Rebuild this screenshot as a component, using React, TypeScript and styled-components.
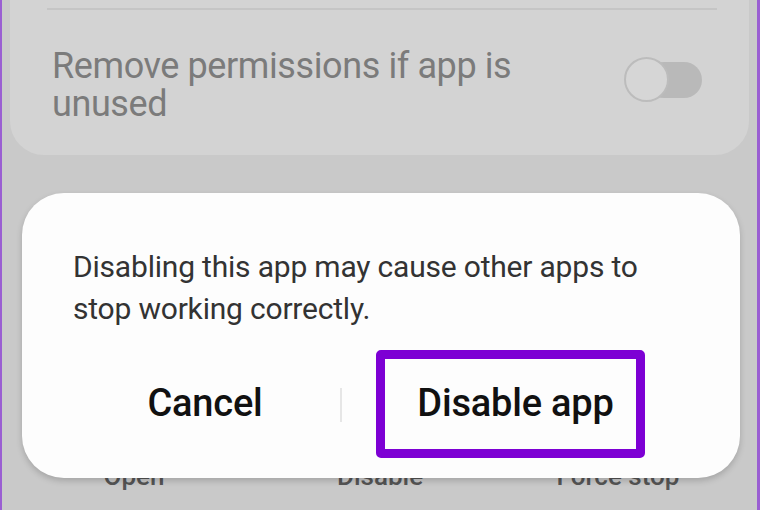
import React from 'react';
import styled, { createGlobalStyle } from 'styled-components';

const GlobalStyle = createGlobalStyle`
  html, body {
    margin: 0;
    padding: 0;
    background: #c9c9c9;
  }
  body {
    font-family: Roboto, "Noto Sans", "Liberation Sans", sans-serif;
  }
`;

const Screen = styled.div`
  position: relative;
  width: 760px;
  height: 510px;
  box-sizing: border-box;
  overflow: hidden;
  background: #c9c9c9;
  border-left: 2px solid #9a5ed2;
  border-right: 3px solid #9a5ed2;
  display: flex;
  flex-direction: column;
`;

const SettingsCard = styled.div`
  margin: 0 8px;
  background: #d3d3d3;
  border-radius: 0 0 34px 34px;
  padding: 8px 42px 0 42px;
  height: 155px;
  box-sizing: border-box;
`;

const Divider = styled.div`
  height: 2px;
  background: #c5c5c5;
  margin: 0 -10px 0 -5px;
`;

const SettingRow = styled.div`
  display: flex;
  align-items: flex-start;
  justify-content: space-between;
  padding-top: 37px;
`;

const SettingText = styled.div`
  font-size: 36px;
  line-height: 38px;
  color: #7b7b7b;
  letter-spacing: -0.4px;
  max-width: 500px;
`;

const Toggle = styled.div`
  position: relative;
  width: 78px;
  height: 44px;
  margin: 10px 5px 0 0;
`;

const Track = styled.div`
  position: absolute;
  right: 0;
  top: 5px;
  width: 56px;
  height: 36px;
  border-radius: 18px;
  background: #b9b9b9;
`;

const Knob = styled.div`
  position: absolute;
  left: 0;
  top: 0;
  width: 41px;
  height: 41px;
  border-radius: 50%;
  background: #d6d6d6;
  border: 2px solid #bcbcbc;
`;

const SectionLabel = styled.div`
  padding: 35px 0 0 52px;
  font-size: 22px;
  font-weight: 700;
  color: #4a4a4a;
`;

const ActionBar = styled.div`
  margin-top: auto;
  display: grid;
  grid-template-columns: 240px 252px 224px;
  padding: 0 0 19px 12px;
`;

const Action = styled.div`
  text-align: center;
  font-size: 26px;
  font-weight: 500;
  color: #555;
`;

const Dialog = styled.div`
  position: absolute;
  left: 20px;
  top: 193px;
  width: 718px;
  height: 285px;
  box-sizing: border-box;
  background: #fdfdfd;
  border-radius: 42px;
  box-shadow: 0 3px 6px rgba(0, 0, 0, 0.18);
  padding: 53px 30px 0 51px;
`;

const Message = styled.p`
  margin: 0;
  font-size: 30px;
  line-height: 42px;
  color: #333;
  letter-spacing: -0.2px;
`;

const ButtonRow = styled.div`
  display: flex;
  align-items: center;
  margin-top: 20px;
`;

const DialogButton = styled.div<{ $width: number }>`
  width: ${p => p.$width}px;
  text-align: center;
  font-size: 38px;
  font-weight: 500;
  color: #111;
  letter-spacing: -0.2px;
  margin-top: -3px;
`;

const ButtonDivider = styled.div`
  width: 2px;
  height: 34px;
  background: #e6e6e6;
  margin: 2px 34px 0 3px;
`;

const Highlight = styled.div`
  width: 269px;
  height: 108px;
  box-sizing: border-box;
  border: 9px solid #7d00d4;
  border-radius: 5px;
  display: flex;
  align-items: center;
  justify-content: center;
  padding-left: 10px;
`;

const App: React.FC = () => {
  return (
    <>
      <GlobalStyle />
      <Screen>
        <SettingsCard>
          <Divider />
          <SettingRow>
            <SettingText>Remove permissions if app is unused</SettingText>
            <Toggle>
              <Track />
              <Knob />
            </Toggle>
          </SettingRow>
        </SettingsCard>

        <SectionLabel>Privacy</SectionLabel>

        <ActionBar>
          <Action>Open</Action>
          <Action>Disable</Action>
          <Action>Force stop</Action>
        </ActionBar>

        <Dialog>
          <Message>
            Disabling this app may cause other apps to
            <br />
            stop working correctly.
          </Message>
          <ButtonRow>
            <DialogButton $width={264}>Cancel</DialogButton>
            <ButtonDivider />
            <Highlight>
              <DialogButton $width={240}>Disable app</DialogButton>
            </Highlight>
          </ButtonRow>
        </Dialog>
      </Screen>
    </>
  );
};

export default App;
